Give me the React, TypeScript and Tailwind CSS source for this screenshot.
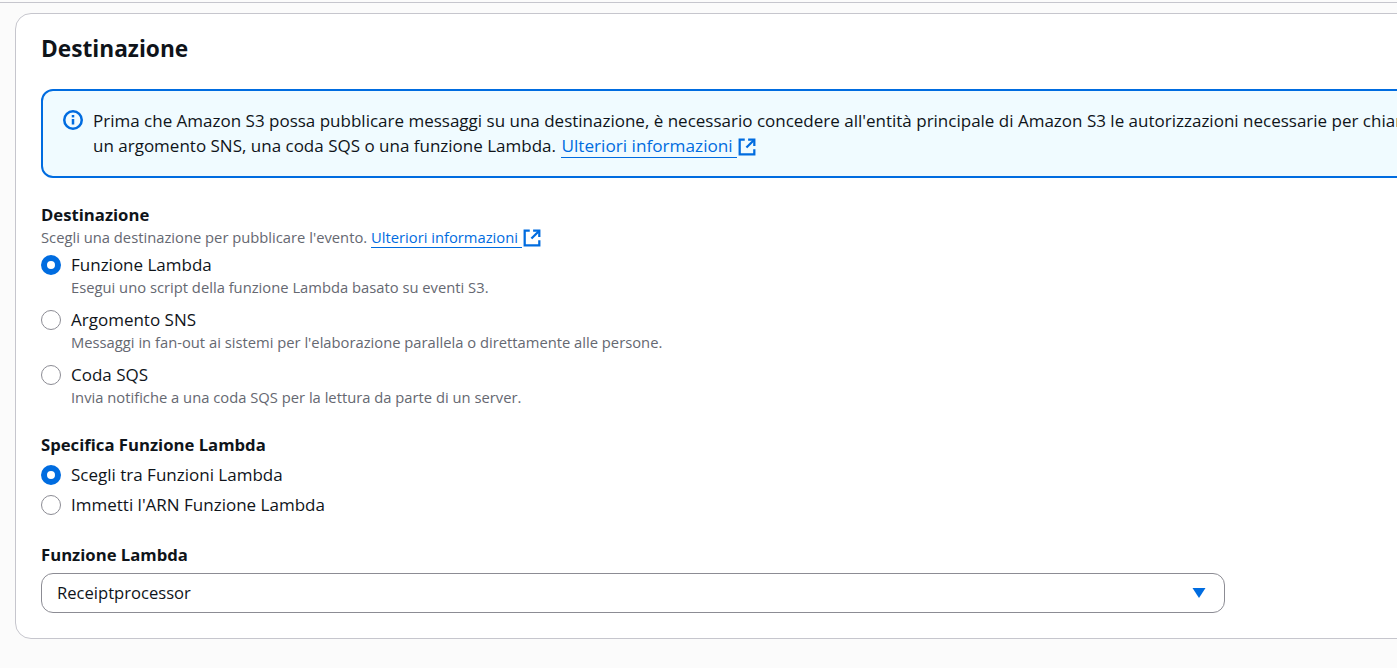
const font = "[font-family:'Open_Sans',sans-serif]";

function ExternalIcon() {
  return (
    <svg viewBox="0 0 16 16" fill="none" stroke="currentColor" strokeWidth="2" className="w-[18px] h-[18px] ml-[1px]">
      <path d="M6 1.5H1.5v13h13V10" />
      <path d="M9 1.5h5.5V7" />
      <path d="M14.5 1.5L7.5 8.5" />
    </svg>
  );
}

function InfoIcon() {
  return (
    <svg viewBox="0 0 20 20" fill="none" className="w-5 h-5 shrink-0 text-[#006ce0]">
      <circle cx="10" cy="10" r="8.75" stroke="currentColor" strokeWidth="2.5" />
      <path d="M10 9v5.5" stroke="currentColor" strokeWidth="2.5" />
      <path d="M10 5v2.4" stroke="currentColor" strokeWidth="2.5" />
    </svg>
  );
}

function Radio({ checked }: { checked: boolean }) {
  return checked ? (
    <span className="w-5 h-5 shrink-0 rounded-full border-[6px] border-[#006ce0] bg-white" />
  ) : (
    <span className="w-5 h-5 shrink-0 rounded-full border border-[#8c8c94] bg-white" />
  );
}

function RadioOption({ label, hint, checked }: { label: string; hint?: string; checked: boolean }) {
  return (
    <div className="flex gap-2.5">
      <div className="h-5 mt-0.5 flex items-center">
        <Radio checked={checked} />
      </div>
      <div>
        <div className="text-[17px] leading-6 text-[#0f141a]">{label}</div>
        {hint && <div className="text-[14.75px] leading-[20px] text-[#656871]">{hint}</div>}
      </div>
    </div>
  );
}

function LearnMore({ className }: { className: string }) {
  return (
    <a className={`inline-flex items-center text-[#006ce0] ${className}`}>
      <span className="border-b border-[#006ce0] leading-[1.2] pr-[4px]">Ulteriori informazioni</span>
      <ExternalIcon />
    </a>
  );
}

export default function App() {
  return (
    <div className={`${font} w-[1397px] h-[668px] overflow-hidden bg-[#fbfbfb] pt-[2px]`}>
      <div className="border-t border-[#c6c6cd] pt-[10px] pl-[15px]">
        <div className="w-[1500px] h-[626px] bg-white border border-[#c6c6cd] rounded-2xl pl-[25px] pt-[18px]">
          <h2 className="text-[22.7px] leading-[34px] font-bold text-[#0f141a]">Destinazione</h2>

          <div className="mt-[23px] w-[1450px] h-[89px] bg-[#f0fbff] border-2 border-[#006ce0] rounded-xl pl-[20px] pt-[17px] flex gap-[10px]">
            <div className="mt-[2px]">
              <InfoIcon />
            </div>
            <p className="text-[17px] leading-[25px] text-[#0f141a] whitespace-nowrap">
              Prima che Amazon S3 possa pubblicare messaggi su una destinazione, è necessario concedere all'entità principale di Amazon S3 le autorizzazioni necessarie per chiamare
              <br />
              un argomento SNS, una coda SQS o una funzione Lambda. <LearnMore className="ml-[1px] text-[17.2px]" />
            </p>
          </div>

          <div className="mt-[25px] text-[16.7px] leading-[24px] font-bold text-[#0f141a]">Destinazione</div>
          <div className="text-[14.75px] leading-[20px] text-[#656871]">
            Scegli una destinazione per pubblicare l'evento. <LearnMore className="" />
          </div>
          <div className="flex flex-col gap-[11px] mt-[5px]">
            <RadioOption checked label="Funzione Lambda" hint="Esegui uno script della funzione Lambda basato su eventi S3." />
            <RadioOption checked={false} label="Argomento SNS" hint="Messaggi in fan-out ai sistemi per l'elaborazione parallela o direttamente alle persone." />
            <RadioOption checked={false} label="Coda SQS" hint="Invia notifiche a una coda SQS per la lettura da parte di un server." />
          </div>

          <div className="mt-[26px] text-[16.7px] leading-[24px] font-bold text-[#0f141a]">Specifica Funzione Lambda</div>
          <div className="flex flex-col gap-[6px] mt-[6px]">
            <RadioOption checked label="Scegli tra Funzioni Lambda" />
            <RadioOption checked={false} label="Immetti l'ARN Funzione Lambda" />
          </div>

          <div className="mt-[26px] text-[16.7px] leading-[24px] font-bold text-[#0f141a]">Funzione Lambda</div>
          <div className="mt-[6px] w-[1184px] h-[40px] border border-[#8c8c94] rounded-xl flex items-center justify-between pl-[15px] pr-[18px]">
            <span className="text-[16.6px] text-[#0f141a] pt-[2px]">Receiptprocessor</span>
            <svg viewBox="0 0 14 12" className="w-[14px] h-[12px] text-[#006ce0]" fill="currentColor">
              <path d="M0.5 1h13L7 11z" />
            </svg>
          </div>
        </div>
      </div>
    </div>
  );
}
